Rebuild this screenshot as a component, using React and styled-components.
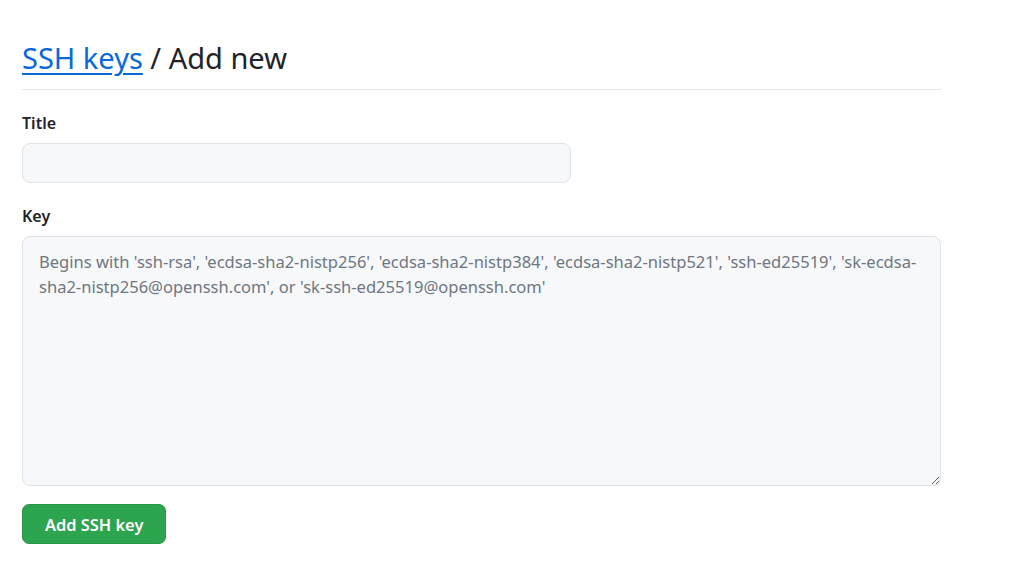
import React, { useState } from "react";
import styled, { createGlobalStyle } from "styled-components";

const GlobalStyle = createGlobalStyle`
  body {
    margin: 0;
    background: #ffffff;
    font-family: "Noto Sans", "Segoe UI", sans-serif;
    color: #1f2328;
  }
`;

const Page = styled.div`
  width: 919px;
  padding: 36px 22px 0;
`;

const Subhead = styled.div`
  padding-bottom: 9px;
  border-bottom: 1px solid #e4e7eb;
  margin-bottom: 21px;
`;

const Heading = styled.h2`
  margin: 0;
  font-size: 29px;
  font-weight: 400;
  line-height: 44px;
  color: #1f2328;
`;

const Crumb = styled.a`
  color: #0969da;
  text-decoration: underline;
  text-decoration-thickness: 2px;
  text-underline-offset: 4px;
`;

const Field = styled.div`
  margin-bottom: ${p => p.gap || "18px"};
`;

const Label = styled.label`
  display: block;
  font-size: 16px;
  font-weight: 600;
  line-height: 24px;
  margin-bottom: 8px;
`;

const Input = styled.input`
  box-sizing: border-box;
  width: ${p => p.width || "100%"};
  height: 40px;
  padding: 0 16px;
  font: inherit;
  font-size: 16px;
  background: #f7f8fa;
  border: 1px solid #dfe2e6;
  border-radius: 8px;
  outline: none;
`;

const TextArea = styled.textarea`
  box-sizing: border-box;
  display: block;
  width: 100%;
  height: 250px;
  padding: 12px 16px;
  font: inherit;
  font-size: 16.55px;
  line-height: 25px;
  background: #f7f8fa;
  border: 1px solid #dfe2e6;
  border-radius: 8px;
  outline: none;
  resize: vertical;

  &::placeholder {
    color: #6e7781;
  }
`;

const Button = styled.button`
  height: 40px;
  padding: 0 22px;
  font: inherit;
  font-size: 16.4px;
  font-weight: 600;
  color: #ffffff;
  background: #2da44e;
  border: 1px solid #2a9447;
  border-radius: 7px;
  cursor: pointer;
`;

const App = () => {
  const [title, setTitle] = useState("");
  const [key, setKey] = useState("");

  return (
    <Page>
      <GlobalStyle />
      <Subhead>
        <Heading>
          <Crumb href="#">SSH keys</Crumb> / Add new
        </Heading>
      </Subhead>
      <Field gap="21px">
        <Label htmlFor="ssh-title">Title</Label>
        <Input
          id="ssh-title"
          width="549px"
          value={title}
          onChange={e => setTitle(e.target.value)}
        />
      </Field>
      <Field>
        <Label htmlFor="ssh-key">Key</Label>
        <TextArea
          id="ssh-key"
          value={key}
          onChange={e => setKey(e.target.value)}
          placeholder="Begins with 'ssh-rsa', 'ecdsa-sha2-nistp256', 'ecdsa-sha2-nistp384', 'ecdsa-sha2-nistp521', 'ssh-ed25519', 'sk-ecdsa-sha2-nistp256@openssh.com', or 'sk-ssh-ed25519@openssh.com'"
        />
      </Field>
      <Button>Add SSH key</Button>
    </Page>
  );
};

export default App;
